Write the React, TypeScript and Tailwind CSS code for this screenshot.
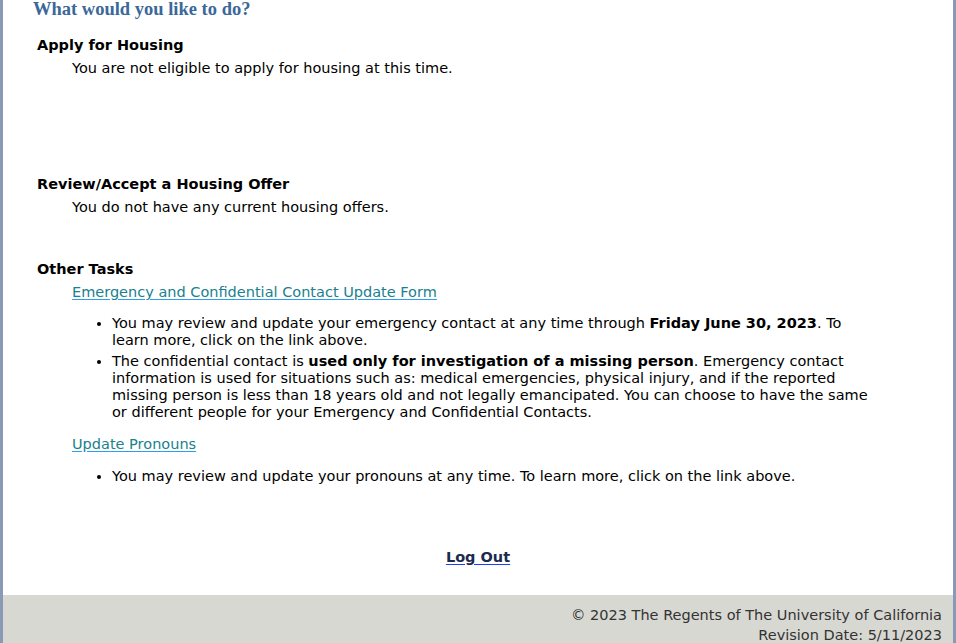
export default function App() {
  return (
    <div className="h-[643px] overflow-hidden border-x-[3px] border-[#8a9ab6] bg-white font-['Verdana','DejaVu_Sans',sans-serif] text-[14.5px] leading-[17px] text-black">
      <div className="pl-[30px] pr-[80px]">
        <h1 className="font-['Georgia','Liberation_Serif',serif] text-[18.5px] font-bold leading-[19px] text-[#3b6899]">
          What would you like to do?
        </h1>

        {/* Apply */}
        <div className="mt-[18px] pl-[4px]">
          <h2 className="font-bold">Apply for Housing</h2>
          <p className="mt-[6px] pl-[35px]">You are not eligible to apply for housing at this time.</p>
        </div>

        {/* Offer */}
        <div className="mt-[99px] pl-[4px]">
          <h2 className="font-bold">Review/Accept a Housing Offer</h2>
          <p className="mt-[6px] pl-[35px]">You do not have any current housing offers.</p>
        </div>

        {/* Other */}
        <div className="mt-[45px] pl-[4px]">
          <h2 className="font-bold">Other Tasks</h2>
          <div className="mt-[6px] pl-[35px]">
            <a href="#" className="text-[#1a7f8e] underline decoration-[#2b9ef0] underline-offset-2">
              Emergency and Confidential Contact Update Form
            </a>
            <ul className="mt-[14px] list-disc pl-[40px]">
              <li className="mb-[4px]">
                You may review and update your emergency contact at any time through{' '}
                <b>Friday June 30, 2023</b>. To learn more, click on the link above.
              </li>
              <li>
                The confidential contact is <b>used only for investigation of a missing person</b>.
                Emergency contact information is used for situations such as: medical emergencies,
                physical injury, and if the reported missing person is less than 18 years old and not
                legally emancipated. You can choose to have the same or different people for your
                Emergency and Confidential Contacts.
              </li>
            </ul>

            <a href="#" className="mt-[15px] inline-block text-[#1a7f8e] underline decoration-[#2b9ef0] underline-offset-2">
              Update Pronouns
            </a>
            <ul className="mt-[15px] list-disc pl-[40px]">
              <li>You may review and update your pronouns at any time. To learn more, click on the link above.</li>
            </ul>
          </div>
        </div>
      </div>

      <div className="mt-[64px] text-center">
        <a href="#" className="font-bold text-[#1b2a4e] underline decoration-[#1f3ff0] underline-offset-2">
          Log Out
        </a>
      </div>

      <footer className="mt-[29px] h-[60px] bg-[#d8d8d2] pr-[11px] pt-[10px] text-right leading-[20px] text-[#333]">
        <div>© 2023 The Regents of The University of California</div>
        <div>Revision Date: 5/11/2023</div>
      </footer>
    </div>
  )
}
